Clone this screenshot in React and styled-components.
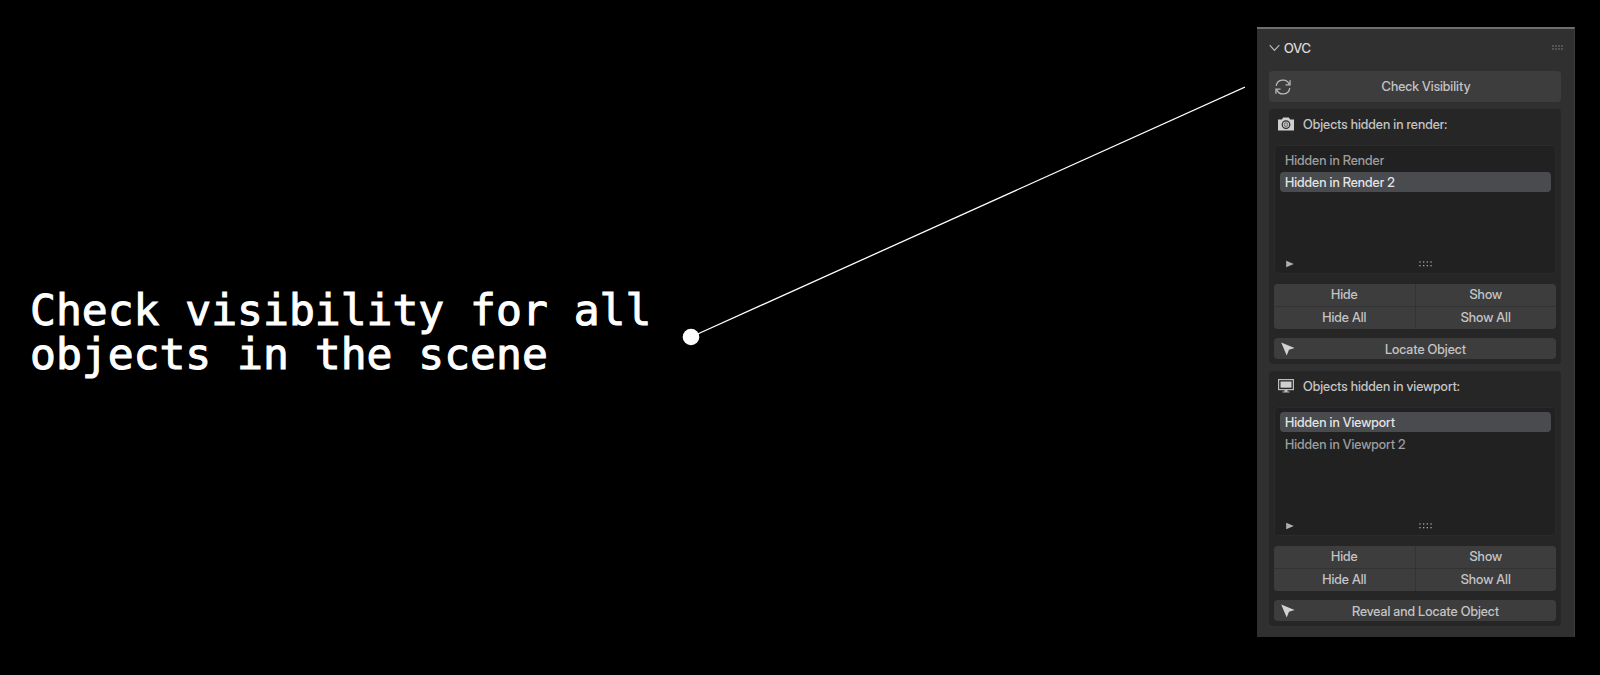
import React, { useState } from 'react'
import styled, { createGlobalStyle } from 'styled-components'

const sections = [
    {
        id: 'render',
        icon: 'camera',
        title: 'Objects hidden in render:',
        items: ['Hidden in Render', 'Hidden in Render 2'],
        active: 1,
        locate: 'Locate Object',
    },
    {
        id: 'viewport',
        icon: 'monitor',
        title: 'Objects hidden in viewport:',
        items: ['Hidden in Viewport', 'Hidden in Viewport 2'],
        active: 0,
        locate: 'Reveal and Locate Object',
    },
]

const icons = {
    camera: (
        <svg width="16" height="14" viewBox="0 0 16 14">
            <path d="M0 2.6h3.8L5.2.4h5.6l1.4 2.2H16v10.8H0z" fill="#cfcfcf" />
            <circle cx="8" cy="7.6" r="3.8" fill="none" stroke="#2c2c2c" strokeWidth="1.2" />
            <circle cx="8" cy="7.6" r="1.9" fill="#b8b8b8" stroke="#555" strokeWidth=".8" />
        </svg>
    ),
    monitor: (
        <svg width="16" height="14" viewBox="0 0 16 14">
            <rect x=".6" y=".6" width="14.8" height="10" fill="none" stroke="#bdbdbd" strokeWidth="1.2" />
            <rect x="2.5" y="2.5" width="11" height="6.2" fill="#cfcfcf" />
            <path d="M6.5 11h3v1.5h2V13.6h-7v-1.1h2z" fill="#bdbdbd" />
        </svg>
    ),
    refresh: (
        <svg width="16" height="16" viewBox="0 0 17 17" fill="none" stroke="#b8b8b8" strokeWidth="1.4">
            <path d="M1.3 7.3A7.2 7.2 0 0 1 15.2 5.9M15.7 9.7A7.2 7.2 0 0 1 1.8 11.1" />
            <path d="M16 1.3v4.9h-4.9M1 15.7v-4.9h4.9" />
        </svg>
    ),
    cursor: (
        <svg width="14" height="14" viewBox="0 0 14 14">
            <path d="M.2.4 13.6 6 8 7.7 5.7 13.6z" fill="#d2d2d2" />
        </svg>
    ),
    chevron: (
        <svg width="11" height="8" viewBox="0 0 11 8">
            <path d="M.7 1.2 5.5 6.4l4.8-5.2" fill="none" stroke="#b8b8b8" strokeWidth="1.2" />
        </svg>
    ),
    triangle: (
        <svg width="8" height="8" viewBox="0 0 8 8">
            <path d="M.2.8 7.8 4 .2 7.2z" fill="#b0b0b0" />
        </svg>
    ),
}

const Grip = ({ pitch, color }) => (
    <svg width={pitch * 3 + 2} height={pitch + 2} fill={color}>
        {[0, 1, 2, 3].map((n) => (
            <g key={n}>
                <rect x={n * pitch + 0.3} y="0.3" width="1.3" height="1.3" />
                <rect x={n * pitch + 0.3} y={pitch + 0.3} width="1.3" height="1.3" />
            </g>
        ))}
    </svg>
)

const ObjectSection = ({ section }) => {
    const [active, setActive] = useState(section.active)

    return (
        <SectionStyled>
            <SectionTitle id={section.id}>
                {icons[section.icon]}
                {section.title}
            </SectionTitle>
            <ListBox>
                <Items aria-labelledby={section.id}>
                    {section.items.map((item, i) => (
                        <li key={item}>
                            <Item $active={i === active} aria-pressed={i === active} onClick={() => setActive(i)}>
                                {item}
                            </Item>
                        </li>
                    ))}
                </Items>
                <ListFooter>
                    <IconButton aria-label="Filter">{icons.triangle}</IconButton>
                    <Grip pitch={3.7} color="#a6a6a6" />
                </ListFooter>
            </ListBox>
            <ButtonGrid>
                <GridButton>Hide</GridButton>
                <GridButton>Show</GridButton>
                <GridButton>Hide All</GridButton>
                <GridButton>Show All</GridButton>
            </ButtonGrid>
            <ActionButton>
                {icons.cursor}
                <span>{section.locate}</span>
            </ActionButton>
        </SectionStyled>
    )
}

const App = () => {
    return (
        <>
            <GlobalStyle />
            <Page>
                <Headline>Check visibility for all objects in the scene</Headline>
                <Connector aria-hidden="true">
                    <line x1="9" y1="251" x2="100%" y2="1" stroke="#fff" strokeWidth="1.3" />
                    <circle cx="9" cy="251" r="8.3" fill="#fff" />
                </Connector>
                <Panel>
                    <PanelHeader>
                        <Collapse>
                            {icons.chevron}
                            OVC
                        </Collapse>
                        <Grip pitch={3} color="#858585" />
                    </PanelHeader>
                    <ActionButton $large>
                        {icons.refresh}
                        <span>Check Visibility</span>
                    </ActionButton>
                    {sections.map((section) => (
                        <ObjectSection key={section.id} section={section} />
                    ))}
                </Panel>
            </Page>
        </>
    )
}

const GlobalStyle = createGlobalStyle`
    *{
        box-sizing: border-box;
    }
    body{
        margin: 0;
        background-color: #000;
    }
    button{
        border: none;
        margin: 0;
        padding: 0;
        background: none;
        color: inherit;
        font: inherit;
        cursor: pointer;
    }
    svg{
        flex: none;
        display: block;
    }
`

const Page = styled.main`
    display: grid;
    grid-template-columns: 640px 1fr 318px;
    column-gap: 12px;
    align-items: center;
    min-height: 100vh;
    padding: 27px 25px 38px 30px;
`

const Headline = styled.h1`
    margin: 0;
    font-family: 'DejaVu Sans Mono', monospace;
    font-size: 43px;
    font-weight: 400;
    line-height: 44px;
    color: #fff;
    -webkit-text-stroke: 1px #fff;
`

const Connector = styled.svg`
    align-self: start;
    width: 100%;
    height: 260px;
    margin-top: 59px;
`

const Panel = styled.aside`
    display: flex;
    flex-direction: column;
    gap: 7px;
    padding: 0 13px 11px 12px;
    border-top: 2px solid #6e6e6e;
    border-right: 1px solid #3c3c3c;
    background-color: #303030;
    font-family: 'Inter Display', Inter, sans-serif;
    font-size: 13px;
    font-weight: 500;
    line-height: 20px;
    color: #c4c4c4;
`

const PanelHeader = styled.header`
    display: flex;
    align-items: center;
    justify-content: space-between;
    height: 35px;
    margin-right: -2px;
    padding-top: 2px;
`

const Collapse = styled.button`
    display: flex;
    align-items: center;
    gap: 4px;
    color: #dcdcdc;
`

const ActionButton = styled.button`
    display: flex;
    align-items: center;
    height: ${(props) => (props.$large ? '31px' : '21px')};
    padding-left: ${(props) => (props.$large ? '6px' : '7px')};
    border-radius: 4px;
    background-color: #3d3d3d;
    span{
        flex: 1;
        padding-bottom: ${(props) => (props.$large ? '2px' : '0')};
        text-align: center;
    }
`

const SectionStyled = styled.section`
    display: flex;
    flex-direction: column;
    padding: 5px;
    border-radius: 4px;
    background-color: #262626;
`

const SectionTitle = styled.h2`
    display: flex;
    align-items: center;
    gap: 9px;
    margin: 0 0 11px;
    padding-left: 4px;
    font-size: 13px;
    font-weight: 500;
    line-height: 20px;
`

const ListBox = styled.div`
    display: flex;
    flex-direction: column;
    justify-content: space-between;
    height: 129px;
    margin-bottom: 10px;
    padding: 4px 4px 4px 5px;
    border: 1px solid #2b2b2b;
    border-radius: 4px;
    background-color: #212121;
`

const Items = styled.ul`
    display: flex;
    flex-direction: column;
    gap: 2px;
    margin: 0;
    padding: 0;
    list-style: none;
`

const Item = styled.button`
    display: block;
    width: 100%;
    height: 20px;
    padding: 0 5px;
    border-radius: 4px;
    text-align: left;
    background-color: ${(props) => (props.$active ? '#4a4b4e' : 'transparent')};
    color: ${(props) => (props.$active ? '#e4e4e4' : '#9e9e9e')};
`

const ListFooter = styled.div`
    display: grid;
    grid-template-columns: 14px 1fr;
    align-items: center;
    height: 10px;
    padding-left: 6px;
    > svg{
        justify-self: center;
    }
`

const IconButton = styled.button`
    justify-self: start;
`

const ButtonGrid = styled.div`
    display: grid;
    grid-template-columns: 1fr 1fr;
    gap: 1px;
    margin-bottom: 9px;
    border-radius: 4px;
    overflow: hidden;
    background-color: #333;
`

const GridButton = styled.button`
    height: 22px;
    padding-bottom: 2px;
    background-color: #3d3d3d;
`

export default App
